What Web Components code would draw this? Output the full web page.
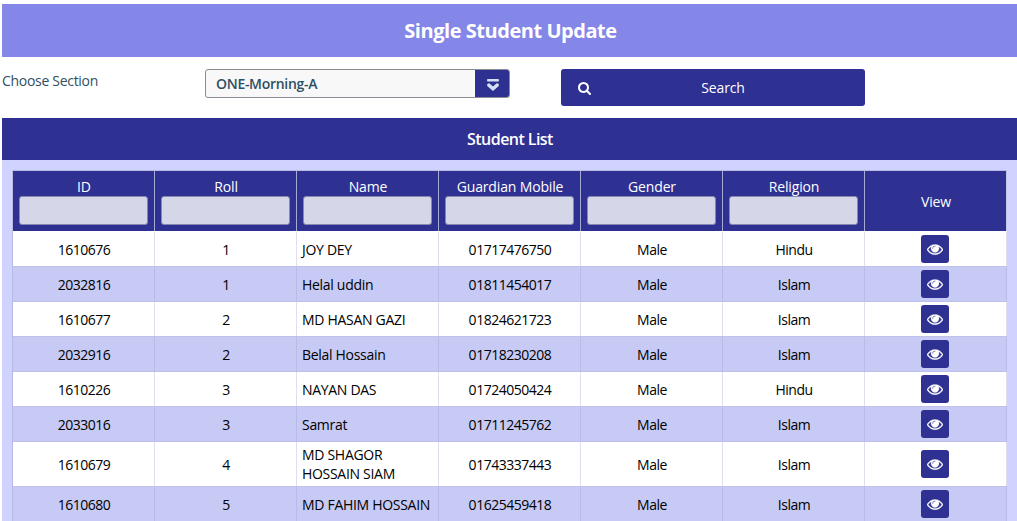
<!DOCTYPE html>
<html lang="en">
<head>
<meta charset="utf-8">
<title>Single Student Update</title>
<style>
body{margin:0;height:521px;overflow:hidden;background:#fff;font:14px/19px "Open Sans",sans-serif;color:#000}
</style>
</head>
<body>
<student-page></student-page>
<script>
const define = (name, html, setup) => customElements.define(name, class extends HTMLElement {
  constructor() {
    super();
    this.attachShadow({mode: 'open'}).innerHTML = html;
  }
  connectedCallback() { if (setup) setup(this, this.shadowRoot); }
});

define('page-banner', `<style>
:host{display:flex;align-items:center;justify-content:center;height:53px;background:#8486e8;color:#fff;font-size:20px;font-weight:700;line-height:27px;letter-spacing:-.46px;padding-left:2px;box-sizing:border-box}
</style><slot></slot>`);

define('section-select', `<style>
:host{display:flex;box-sizing:border-box;width:305px;height:29px;border:1px solid #8c8c94;border-radius:3px;background:#f8f8f8;color:#2f4f63;font-weight:600;overflow:hidden}
.value{flex:1;padding:4px 10px;letter-spacing:-.3px}
.trigger{width:35px;margin:-1px;background:#2e3092;display:flex;align-items:center;justify-content:center}
svg{display:block;margin-top:2px}
</style><span class="value"><slot></slot></span>
<span class="trigger"><svg width="12" height="12" viewBox="0 0 12 12"><path fill="#d3e2f3" d="M.8 0h10.4q.8 0 .8 1.2t-.8 1.200H.8Q0 2.400 0 1.200T.8 0zM0 5.800Q.8 4 2.300 4.200L6 7.600l3.700-3.400Q11.200 4 12 5.800q0 1-.8 1.700L6 12 .8 7.500Q0 6.800 0 5.800z"/></svg></span>`);

define('search-button', `<style>
:host{display:flex;align-items:center;box-sizing:border-box;width:304px;height:37px;border-radius:3px;background:#2e3092;color:#fff;padding-left:17px}
svg{display:block}
span{flex:1;text-align:center;padding-right:11px;letter-spacing:-.15px}
</style><svg width="14" height="14" viewBox="0 0 1792 1792"><path fill="#fff" d="M1152 832q0-185-131.500-316.500t-316.500-131.500-316.500 131.500-131.500 316.500 131.500 316.500 316.500 131.500 316.500-131.500 131.500-316.500zm512 832q0 52-38 90t-90 38q-54 0-90-38l-343-342q-179 124-399 124-143 0-273.500-55.500t-225-150-150-225-55.500-273.500 55.500-273.500 150-225 225-150 273.500-55.500 273.500 55.500 225 150 150 225 55.500 273.500q0 220-124 399l343 343q37 37 37 90z"/></svg><span><slot></slot></span>`);

define('view-button', `<style>
:host{display:flex;align-items:center;justify-content:center;width:28px;height:28px;border-radius:3px;background:#2e3092;margin-right:1px}
</style><svg width="16" height="16" viewBox="0 0 1792 1792"><path fill="#fff" stroke="#fff" stroke-width="30" d="M1664 960q-152-236-381-353 61 104 61 225 0 185-131.500 316.500t-316.500 131.500-316.500-131.500-131.500-316.500q0-121 61-225-229 117-381 353 133 205 333.500 326.500t434.500 121.500 434.500-121.500 333.500-326.500zm-720-384q0-20-14-34t-34-14q-125 0-214.500 89.500t-89.500 214.500q0 20 14 34t34 14 34-14 14-34q0-86 61-147t147-61q20 0 34-14t14-34zm848 384q0 34-20 69-140 230-376.500 368.500t-499.500 138.500-499.500-139-376.500-368q-20-35-20-69t20-69q140-229 376.500-368t499.500-139 499.500 139 376.500 368q20 35 20 69z"/></svg>`);

define('filter-heading', `<style>
:host{display:flex;flex-direction:column;align-items:center;box-sizing:border-box;height:60px;padding:6px 6px 0;border-right:1px solid #a5a9d3;background:#2e3092;color:#fff;font-weight:500;letter-spacing:-.15px}
:host([plain]){padding-top:21px;border-right-color:#c3c7ea}
:host([plain]) i{display:none}
span{padding-left:1px}
i{box-sizing:border-box;width:129px;height:29px;background:#d6d6e9;border:1px solid #8587b0;border-radius:3px}
</style><span><slot></slot></span><i></i>`);

define('student-row', `<style>
:host{display:grid;grid-template-columns:repeat(7,142px);box-sizing:border-box;height:35px;background:#fff;border-bottom:1px solid #bfc3ea}
:host(:first-child){height:36px;padding-top:1px}
:host([tall]){height:45px}
:host(:nth-child(even)){background:#c6caf5;border-color:#bbbfe9}
span{display:flex;align-items:center;justify-content:center;border-right:1px solid #dfdff0;letter-spacing:-.48px;padding:0 5px 0 6px}
:host(:nth-child(even)) span{border-color:#b7bbe6}
.name{justify-content:flex-start;padding:0 0 0 5px;letter-spacing:-.3px}
.action{padding:0 5px}
</style>`, (host, root) => {
  host.getAttribute('values').split('|').forEach((value, i) => {
    const cell = document.createElement('span');
    cell.textContent = value;
    if (i === 2) cell.className = 'name';
    root.append(cell);
  });
  const action = document.createElement('span');
  action.className = 'action';
  action.append(document.createElement('view-button'));
  root.append(action);
});

define('student-table', `<style>
:host{display:block;width:994px;border:1px solid #b6b9e3;border-width:1px 0 0 1px}
.head{display:grid;grid-template-columns:repeat(7,142px)}
</style>
<div class="head"><filter-heading>ID</filter-heading><filter-heading>Roll</filter-heading><filter-heading>Name</filter-heading><filter-heading>Guardian Mobile</filter-heading><filter-heading>Gender</filter-heading><filter-heading>Religion</filter-heading><filter-heading plain>View</filter-heading></div>
<div>
<student-row values="1610676|1|JOY DEY|01717476750|Male|Hindu"></student-row>
<student-row values="2032816|1|Helal uddin|01811454017|Male|Islam"></student-row>
<student-row values="1610677|2|MD HASAN GAZI|01824621723|Male|Islam"></student-row>
<student-row values="2032916|2|Belal Hossain|01718230208|Male|Islam"></student-row>
<student-row values="1610226|3|NAYAN DAS|01724050424|Male|Hindu"></student-row>
<student-row values="2033016|3|Samrat|01711245762|Male|Islam"></student-row>
<student-row tall values="1610679|4|MD SHAGOR HOSSAIN SIAM|01743337443|Male|Islam"></student-row>
<student-row values="1610680|5|MD FAHIM HOSSAIN|01625459418|Male|Islam"></student-row>
</div>`);

define('list-panel', `<style>
:host{display:block;background:#d0d3ff}
h2{margin:0;height:42px;background:#2e3092;color:#fff;font-size:16px;font-weight:600;line-height:42px;text-align:center;letter-spacing:-.55px;padding-left:1px}
.body{padding:10px 0 0 10px}
</style><h2><slot name="title"></slot></h2><div class="body"><slot></slot></div>`);

define('student-page', `<style>
:host{display:block;padding:4px 0 0 2px}
.form{display:grid;grid-template-columns:203px 356px 1fr;height:49px;padding-top:12px}
label{color:#2f4f63;padding-top:3px;line-height:18px;letter-spacing:-.3px}
</style>
<page-banner>Single Student Update</page-banner>
<div class="form"><label>Choose Section</label><section-select>ONE-Morning-A</section-select><search-button>Search</search-button></div>
<list-panel><span slot="title">Student List</span><student-table></student-table></list-panel>`);
</script>
</body>
</html>
